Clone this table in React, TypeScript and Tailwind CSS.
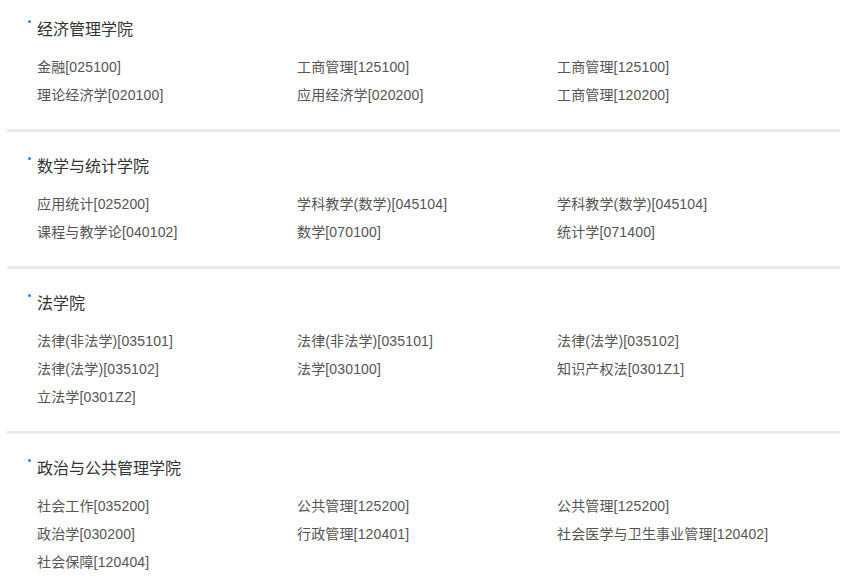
import React from "react";

type Section = { name: string; majors: string[] };

const sections: Section[] = [
  {
    name: "经济管理学院",
    majors: [
      "金融[025100]",
      "工商管理[125100]",
      "工商管理[125100]",
      "理论经济学[020100]",
      "应用经济学[020200]",
      "工商管理[120200]",
    ],
  },
  {
    name: "数学与统计学院",
    majors: [
      "应用统计[025200]",
      "学科教学(数学)[045104]",
      "学科教学(数学)[045104]",
      "课程与教学论[040102]",
      "数学[070100]",
      "统计学[071400]",
    ],
  },
  {
    name: "法学院",
    majors: [
      "法律(非法学)[035101]",
      "法律(非法学)[035101]",
      "法律(法学)[035102]",
      "法律(法学)[035102]",
      "法学[030100]",
      "知识产权法[0301Z1]",
      "立法学[0301Z2]",
    ],
  },
  {
    name: "政治与公共管理学院",
    majors: [
      "社会工作[035200]",
      "公共管理[125200]",
      "公共管理[125200]",
      "政治学[030200]",
      "行政管理[120401]",
      "社会医学与卫生事业管理[120402]",
      "社会保障[120404]",
    ],
  },
];

const App = () => {
  return (
    <div
      className="min-h-[586px] bg-white px-[7px] w-[847px]"
      style={{ fontFamily: '"Liberation Sans", "Noto Sans CJK SC", sans-serif' }}
    >
      {sections.map((s, i) => (
        <div
          key={s.name}
          className={`pl-[30px] pb-[20px] ${i === 0 ? "pt-[20px]" : "pt-[25px]"} ${
            i < sections.length - 1 ? "border-b-[3px] border-[#ebebeb]" : ""
          }`}
        >
          <div className="relative h-[20px] leading-[20px] text-[16px] text-[#333]">
            <span className="absolute left-[-9px] top-[0px] w-[3px] h-[3px] rounded-full bg-[#1e8ae8]" />
            {s.name}
          </div>
          <div className="mt-[13px] grid grid-cols-[260px_260px_260px]">
            {s.majors.map((m, j) => (
              <div
                key={j}
                className="h-[28px] leading-[28px] text-[14px] text-[#555] whitespace-nowrap tracking-[0.15px]"
              >
                {m}
              </div>
            ))}
          </div>
        </div>
      ))}
    </div>
  );
};

export default App;
